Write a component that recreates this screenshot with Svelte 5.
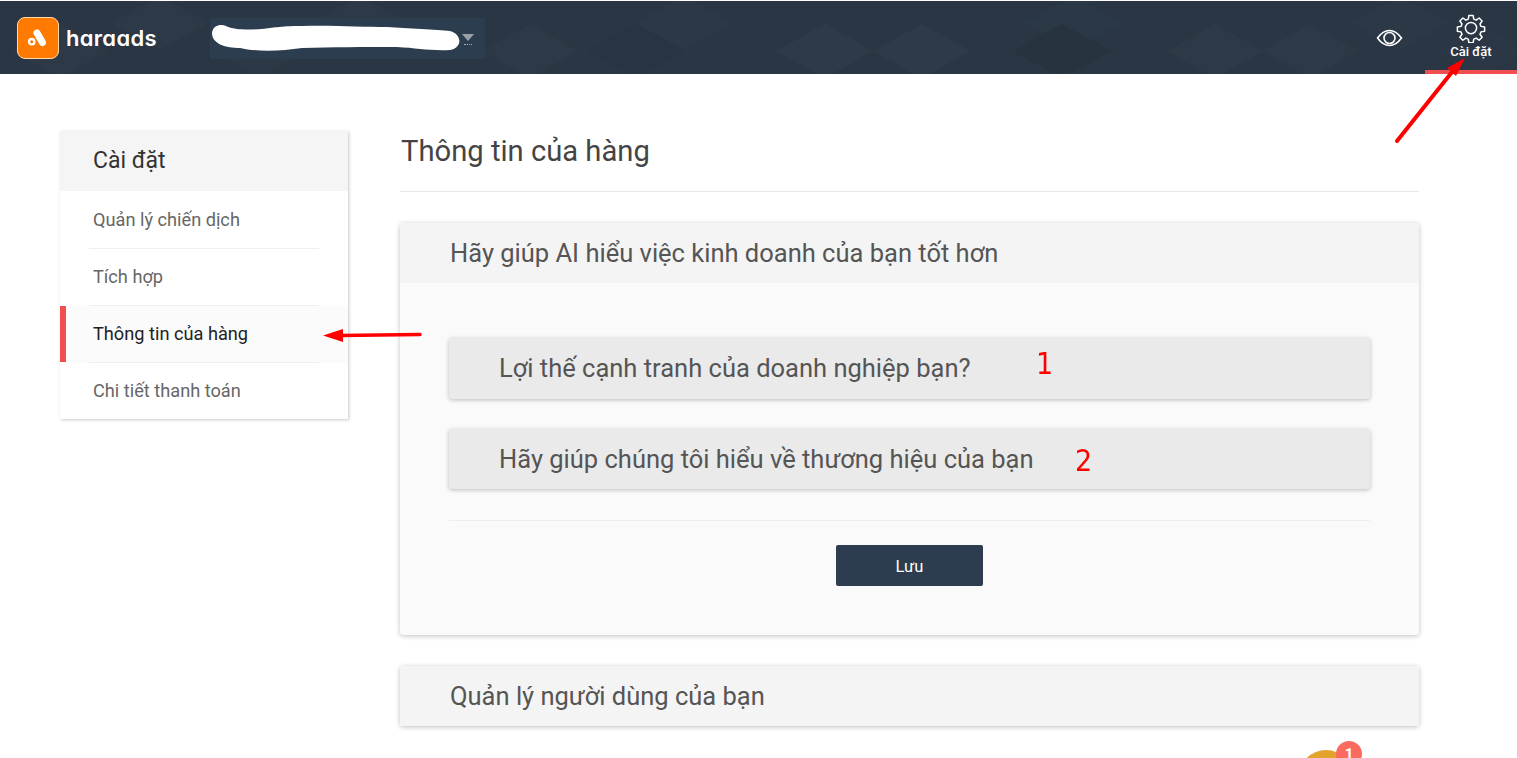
<script>
  let menu = [
    { label: 'Quản lý chiến dịch' },
    { label: 'Tích hợp' },
    { label: 'Thông tin của hàng', active: true },
    { label: 'Chi tiết thanh toán' }
  ];
  let questions = ['Lợi thế cạnh tranh của doanh nghiệp bạn?', 'Hãy giúp chúng tôi hiểu về thương hiệu của bạn'];

  // faint diamonds of the header background: [center x, center y, fill]
  let diamonds = [
    [60, 50, '#2d3946'], [160, 22, '#2d3946'], [260, 50, '#2c3845'], [360, 22, '#2d3946'], [530, 50, '#2d3946'],
    [636, 50, '#283441'], [684, 22, '#2c3846'], [825, 50, '#2e3a47'], [922, 50, '#2e3a47'],
    [1074, 22, '#2b3846'], [1062, 50, '#27333f'], [1215, 50, '#2d3946'], [1310, 50, '#2d3946'],
    [1400, 22, '#2c3845'], [1480, 50, '#2b3744']
  ];
</script>

<header class="topbar">
  <svg class="pattern" width="1517" height="73" viewBox="0 0 1517 73">
    {#each diamonds as [cx, cy, fill]}
      <polygon points="{cx - 49},{cy} {cx},{cy - 27} {cx + 49},{cy} {cx},{cy + 27}" {fill} />
    {/each}
  </svg>

  <div class="logo">
    <span class="logo-mark">
      <svg width="24" height="24" viewBox="0 0 24 24">
        <line x1="11" y1="7" x2="16.500" y2="16.500" stroke="#fff" stroke-width="7" stroke-linecap="round" />
        <circle cx="5.700" cy="15.700" r="2.700" fill="none" stroke="#fff" stroke-width="2.300" />
      </svg>
    </span>
    <span class="logo-text">haraads</span>
  </div>

  <div class="account">
    <svg class="scribble" width="250" height="28" viewBox="0 0 250 28">
      <path d="M0 9 C1 1 9 0 14 2 C22 6 36 6 50 5 C62 4 66 2 90 2 C120 1 150 3 175 3 C195 4 225 6 238 7 C250 10 251 24 238 26 C218 27 205 24 185 23 C150 23 120 23 90 24 C70 27 45 28 28 24 C14 24 0 20 0 9 Z" fill="#fff" />
    </svg>
    <span class="caret"></span>
  </div>

  <div class="actions">
    <button class="icon-btn eye" aria-label="Xem">
      <svg width="27" height="26" viewBox="0 0 26 26" fill="none" stroke="#fff" stroke-width="1.600">
        <path d="M1 13 C5 7.500 9 5.500 13 5.500 C17 5.500 21 7.500 25 13 C21 18.500 17 20.500 13 20.500 C9 20.500 5 18.500 1 13 Z" />
        <circle cx="13" cy="13" r="5.500" />
      </svg>
    </button>
    <button class="icon-btn settings">
      <svg width="30" height="30" viewBox="0 0 24 24" fill="none" stroke="#fff" stroke-width="1.200" stroke-linejoin="round">
        <circle cx="12" cy="12" r="4.500" />
        <path d="M10.300 2h3.400l.5 2.900 1.900.8 2.400-1.700 2.400 2.400-1.700 2.400.8 1.900 2.900.5v3.400l-2.900.5-.8 1.900 1.700 2.400-2.400 2.400-2.400-1.700-1.900.8-.5 2.900h-3.400l-.5-2.900-1.900-.8-2.400 1.700-2.400-2.400 1.700-2.400-.8-1.900-2.900-.5v-3.400l2.900-.5.8-1.900-1.700-2.400 2.400-2.400 2.400 1.700 1.900-.8z" />
      </svg>
      <span>Cài đặt</span>
    </button>
  </div>
</header>

<div class="page">
  <aside class="sidebar">
    <h2>Cài đặt</h2>
    <ul>
      {#each menu as item}
        <li class:active={item.active}><span>{item.label}</span></li>
      {/each}
    </ul>
  </aside>

  <main class="content">
    <h1>Thông tin của hàng</h1>

    <section class="card">
      <h3>Hãy giúp AI hiểu việc kinh doanh của bạn tốt hơn</h3>
      <div class="card-body">
        {#each questions as q}
          <div class="question">{q}</div>
        {/each}
        <div class="footer">
          <button class="save">Lưu</button>
        </div>
      </div>
    </section>

    <section class="card">
      <h3>Quản lý người dùng của bạn</h3>
    </section>
  </main>
</div>

<!-- chat bubble -->
<div class="chat"></div>
<div class="chat-badge">1</div>

<!-- annotations drawn on top of the screenshot -->
<svg class="notes" width="1517" height="758" viewBox="0 0 1517 758">
  <line x1="1397" y1="141" x2="1452" y2="72" stroke="#f00" stroke-width="4" stroke-linecap="round" />
  <polygon points="1465,58 1456,76 1447,68" fill="#f00" />
  <line x1="420" y1="334.500" x2="340" y2="335.500" stroke="#f00" stroke-width="3.500" stroke-linecap="round" />
  <polygon points="323,335.500 343,329 343,342" fill="#f00" />
</svg>
<span class="num one">1</span>
<span class="num two">2</span>

<style>
  :global(body) {
    margin: 0;
    background: #fff;
    font-family: Roboto, "Liberation Sans", sans-serif;
    height: 758px;
    overflow: hidden;
  }
  .topbar {
    position: relative;
    margin-top: 1px;
    height: 73px;
    background: #2a3643;
    display: flex;
    align-items: center;
    overflow: hidden;
  }
  .pattern {
    position: absolute;
    left: 0;
    top: 0;
  }
  .logo {
    position: relative;
    display: flex;
    align-items: center;
    margin-left: 17px;
    gap: 7px;
    width: 193px;
  }
  .logo-mark {
    width: 42px;
    height: 42px;
    box-sizing: border-box;
    background: #ff7a00;
    border: 1.5px solid #ffd9ae;
    border-radius: 8px;
    display: flex;
    align-items: center;
    justify-content: center;
    flex: none;
  }
  .logo-text {
    color: #fff;
    font-family: Inter, sans-serif;
    font-feature-settings: "cv11";
    font-weight: 600;
    font-size: 22px;
    letter-spacing: 0.3px;
  }
  .account {
    position: relative;
    width: 275px;
    height: 41px;
    background: #2d3d50;
    display: flex;
    align-items: center;
    margin-top: 1px;
  }
  .scribble {
    margin-left: 2px;
    flex: none;
  }
  .caret {
    position: relative;
    top: -1px;
    width: 0;
    height: 0;
    border-left: 6px solid transparent;
    border-right: 6px solid transparent;
    border-top: 7px solid #99a0a8;
  }
  .caret::after {
    content: "";
    position: absolute;
    left: -4px;
    top: -4px;
    width: 8px;
    border-top: 1px dotted #aab0b6;
    transform: translateY(7px);
  }
  .actions {
    position: relative;
    margin-left: auto;
    display: flex;
    height: 100%;
    align-items: stretch;
  }
  .icon-btn {
    background: none;
    border: 0;
    padding: 0;
    color: #fff;
    font: inherit;
  }
  .eye {
    width: 71px;
    display: flex;
    align-items: center;
    justify-content: center;
  }
  .settings {
    width: 92px;
    display: flex;
    flex-direction: column;
    align-items: center;
    padding-top: 12px;
    box-sizing: border-box;
    border-bottom: 4px solid #f04e50;
    font-size: 13px;
    line-height: 16px;
    font-weight: 500;
    gap: 1px;
  }
  .settings svg {
    flex: none;
  }
  .page {
    display: flex;
    align-items: flex-start;
    padding: 56px 98px 0 60px;
  }
  .sidebar {
    width: 288px;
    flex: none;
    margin-top: 1px;
    background: #fff;
    box-shadow: 1px 1px 3px rgba(0, 0, 0, 0.22);
  }
  .sidebar h2 {
    margin: 0;
    height: 60px;
    line-height: 59px;
    padding-left: 33px;
    background: #f5f5f5;
    font-size: 23px;
    font-weight: 400;
    color: #333;
  }
  .sidebar ul {
    list-style: none;
    margin: 0;
    padding: 1px 0 0;
  }
  .sidebar li {
    height: 57px;
    position: relative;
    font-size: 18.200px;
    color: #666;
  }
  .sidebar li:last-child {
    height: 56px;
  }
  .sidebar li span {
    display: flex;
    align-items: center;
    box-sizing: border-box;
    height: 57px;
    padding: 0 0 2px 4px;
    margin: 0 29px;
    border-bottom: 1px solid #eee;
  }
  .sidebar li:last-child span {
    border-bottom: 0;
  }
  .sidebar li.active {
    background: #fbfbfb;
    color: #222;
  }
  .sidebar li.active::before {
    content: "";
    position: absolute;
    left: 0;
    top: 0;
    bottom: 1px;
    width: 6px;
    background: #f04e50;
  }
  .content {
    flex: 1;
    margin-left: 52px;
  }
  h1 {
    margin: 0 0 31px;
    height: 61px;
    line-height: 42px;
    padding-left: 1px;
    font-size: 29.200px;
    font-weight: 400;
    color: #444;
    border-bottom: 1px solid #e8e8e8;
  }
  .card {
    background: #fafafa;
    border-radius: 3px;
    box-shadow: 0 1px 5px rgba(0, 0, 0, 0.25);
    margin-bottom: 31px;
  }
  .card h3 {
    margin: 0;
    height: 60px;
    line-height: 60px;
    padding-left: 50px;
    background: #f4f4f4;
    font-size: 25.500px;
    font-weight: 400;
    color: #555;
  }
  .card-body {
    padding: 55px 49px 49px;
  }
  .question {
    height: 61px;
    line-height: 61px;
    margin-bottom: 30px;
    padding-left: 50px;
    background: #eaeaea;
    border-radius: 3px;
    box-shadow: 0 1px 4px rgba(0, 0, 0, 0.25);
    font-size: 25.500px;
    color: #555;
  }
  .question + .question {
    height: 60px;
    line-height: 60px;
    margin-bottom: 31px;
  }
  .footer {
    border-top: 1px solid #eee;
    padding-top: 24px;
    display: flex;
    justify-content: center;
  }
  .save {
    width: 147px;
    height: 41px;
    padding: 2px 0 0;
    background: #2d3c4e;
    color: #fff;
    border: 0;
    border-radius: 2px;
    font: inherit;
    font-size: 16.500px;
  }
  .chat {
    position: fixed;
    left: 1298px;
    top: 750px;
    width: 56px;
    height: 56px;
    border-radius: 50%;
    background: #e3a32c;
  }
  .chat-badge {
    position: fixed;
    left: 1336px;
    top: 741px;
    width: 26px;
    height: 26px;
    border-radius: 50%;
    background: #fb6a5e;
    color: #fff;
    font-size: 15px;
    font-weight: 700;
    text-align: center;
    line-height: 26px;
  }
  .notes {
    position: fixed;
    left: 0;
    top: 0;
    pointer-events: none;
  }
  .num {
    position: fixed;
    color: #f00;
    font-family: "DejaVu Sans Condensed", "DejaVu Sans", sans-serif;
    font-stretch: condensed;
    font-size: 30px;
    line-height: 34px;
  }
  .one {
    left: 1036px;
    top: 347px;
  }
  .two {
    left: 1075px;
    top: 444px;
  }
</style>
